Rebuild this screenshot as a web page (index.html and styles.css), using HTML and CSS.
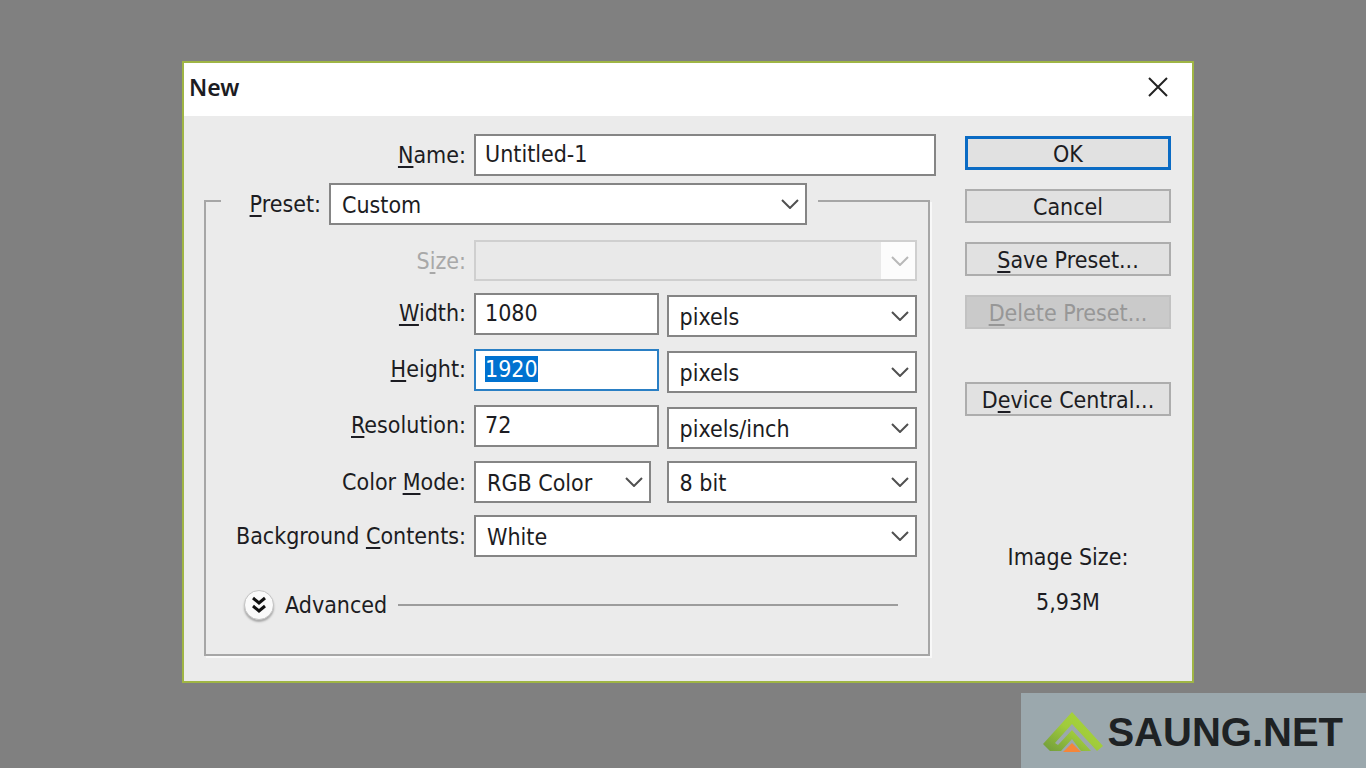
FILE: index.html
```html
<!DOCTYPE html>
<html lang="en">
<head>
<meta charset="utf-8">
<title>New</title>
<link rel="stylesheet" href="styles.css">
</head>
<body>
<div class="page">
  <form class="dialog" role="dialog" aria-labelledby="dialog-title">
    <header class="titlebar">
      <h1 class="title" id="dialog-title">New</h1>
      <button class="close" type="button" aria-label="Close">
        <svg viewBox="0 0 20 20" width="20" height="20"><path d="M1 1L19 19M19 1L1 19" fill="none" stroke="#222" stroke-width="2"/></svg>
      </button>
    </header>
    <div class="content">
      <div class="main">
        <div class="name-row">
          <label class="label" for="name"><u>N</u>ame:</label>
          <input class="field" id="name" type="text" value="Untitled-1">
        </div>
        <fieldset class="group">
          <legend class="legend">
            <span class="preset-row">
              <label class="label" for="preset"><u>P</u>reset:</label>
              <span class="select">
                <select id="preset"><option>Custom</option></select>
                <svg class="chevron" viewBox="0 0 18 10"><path d="M1 1L9 9L17 1"/></svg>
              </span>
            </span>
          </legend>
          <div class="rows">
            <div class="row">
              <label class="label label-off" for="size">S<u>i</u>ze:</label>
              <span class="select select-off">
                <select id="size" disabled><option></option></select>
                <svg class="chevron" viewBox="0 0 18 10"><path d="M1 1L9 9L17 1"/></svg>
              </span>
            </div>
            <div class="row row-pair">
              <label class="label" for="width"><u>W</u>idth:</label>
              <input class="field" id="width" type="text" value="1080">
              <span class="select">
                <select aria-label="Width unit"><option>pixels</option></select>
                <svg class="chevron" viewBox="0 0 18 10"><path d="M1 1L9 9L17 1"/></svg>
              </span>
            </div>
            <div class="row row-pair">
              <label class="label" for="height"><u>H</u>eight:</label>
              <input class="field" id="height" type="text" value="1920">
              <span class="select">
                <select aria-label="Height unit"><option>pixels</option></select>
                <svg class="chevron" viewBox="0 0 18 10"><path d="M1 1L9 9L17 1"/></svg>
              </span>
            </div>
            <div class="row row-pair">
              <label class="label" for="resolution"><u>R</u>esolution:</label>
              <input class="field" id="resolution" type="text" value="72">
              <span class="select">
                <select aria-label="Resolution unit"><option>pixels/inch</option></select>
                <svg class="chevron" viewBox="0 0 18 10"><path d="M1 1L9 9L17 1"/></svg>
              </span>
            </div>
            <div class="row row-mode">
              <label class="label" for="mode">Color <u>M</u>ode:</label>
              <span class="select select-narrow">
                <select id="mode"><option>RGB Color</option></select>
                <svg class="chevron" viewBox="0 0 18 10"><path d="M1 1L9 9L17 1"/></svg>
              </span>
              <span class="select">
                <select aria-label="Bit depth"><option>8 bit</option></select>
                <svg class="chevron" viewBox="0 0 18 10"><path d="M1 1L9 9L17 1"/></svg>
              </span>
            </div>
            <div class="row">
              <label class="label" for="background">Background <u>C</u>ontents:</label>
              <span class="select">
                <select id="background"><option>White</option></select>
                <svg class="chevron" viewBox="0 0 18 10"><path d="M1 1L9 9L17 1"/></svg>
              </span>
            </div>
          </div>
          <div class="advanced">
            <button class="expand" type="button" aria-labelledby="advanced-label">
              <svg viewBox="0 0 16 18" width="16" height="18"><path d="M2 2L8 7L14 2M2 10L8 15L14 10" fill="none" stroke="#111" stroke-width="3"/></svg>
            </button>
            <span id="advanced-label">Advanced</span>
            <span class="rule"></span>
          </div>
        </fieldset>
      </div>
      <div class="side">
        <button class="button button-default" type="submit">OK</button>
        <button class="button" type="button">Cancel</button>
        <button class="button" type="button"><span><u>S</u>ave Preset...</span></button>
        <button class="button" type="button" disabled><span><u>D</u>elete Preset...</span></button>
        <button class="button button-apart" type="button"><span>D<u>e</u>vice Central...</span></button>
        <div class="image-size">
          <span>Image Size:</span>
          <span>5,93M</span>
        </div>
      </div>
    </div>
  </form>
  <footer class="brand">
    <svg viewBox="0 0 60 40" width="60" height="40" aria-hidden="true">
      <defs>
        <linearGradient id="leaf" x1="0" y1="1" x2="1" y2="0">
          <stop offset="0" stop-color="#6f9a3c"/>
          <stop offset=".5" stop-color="#a0cb3b"/>
          <stop offset="1" stop-color="#a9d83a"/>
        </linearGradient>
      </defs>
      <path d="M0 32L29 0L60 34L54 39L29 12L12 31L15 33L29 18L48 39H38L29 27L18 39H7Z" fill="url(#leaf)"/>
      <path d="M20 40L29 31L38 40Z" fill="#f5863a"/>
    </svg>
    <span>SAUNG.NET</span>
  </footer>
</div>
<script src="script.js"></script>
</body>
</html>
```
FILE: styles.css
```css
* {
  box-sizing: border-box;
}

body {
  margin: 0;
  background: #808080;
  color: #1c1c22;
  font-family: "DejaVu Sans Condensed", "Noto Sans", sans-serif;
  font-size: 23px;
  line-height: 30px;
}

input,
select,
button {
  margin: 0;
  color: inherit;
  font: inherit;
}

u {
  text-decoration-thickness: 2px;
  text-underline-offset: 3px;
}

::selection {
  background: #0072d0;
  color: #fff;
}

.page {
  display: flex;
  flex-direction: column;
  min-height: 100vh;
  padding-top: 61px;
}

.dialog {
  margin: 0 172px 10px 182px;
  border: 2px solid #9fb545;
  background: #ebebeb;
}

.titlebar {
  display: flex;
  align-items: center;
  justify-content: space-between;
  height: 53px;
  padding: 0 24px 5px 5px;
  background: #fff;
}

.title {
  margin: 0;
  font-family: "Noto Sans", sans-serif;
  font-size: 23px;
  font-weight: 600;
}

.close {
  display: flex;
  padding: 0;
  border: 0;
  background: none;
}

.content {
  display: flex;
  gap: 29px;
  padding: 18px 21px 25px 20px;
}

.main {
  flex: 1;
}

.name-row {
  display: grid;
  grid-template-columns: 262px 1fr;
  column-gap: 8px;
}

.label {
  align-self: center;
  text-align: right;
  white-space: nowrap;
}

.label-off {
  color: #a8a8a8;
}

.field {
  width: 100%;
  min-width: 0;
  height: 42px;
  padding: 0 9px 3px;
  border: 2px solid #858585;
  border-radius: 0;
  background: #fff;
  outline: 0;
}

.field:focus {
  border-color: #2a7fc4;
}

.group {
  min-width: 0;
  margin: 0 6px 0 0;
  padding: 0;
  border: 2px solid #a6a6a6;
  box-shadow: 2px 2px 0 #f8f8f8;
}

.legend {
  width: 597px;
  margin-left: 15px;
  padding: 7px 11px 0 0;
}

.preset-row {
  display: grid;
  grid-template-columns: 100px 1fr;
  column-gap: 8px;
}

.select {
  display: grid;
  grid-template-columns: 1fr 36px;
  align-items: center;
  height: 42px;
  border: 2px solid #858585;
  background: #fff;
}

.select select {
  grid-area: 1 / 1 / 2 / 3;
  width: 100%;
  height: 100%;
  padding: 2px 36px 0 11px;
  border: 0;
  background: none;
  appearance: none;
  outline: 0;
}

.chevron {
  grid-area: 1 / 2;
  width: 18px;
  height: 10px;
  margin-left: 12px;
  fill: none;
  stroke: #505050;
  stroke-width: 2;
  pointer-events: none;
}

.select-off {
  height: 41px;
  border-color: #cfcfcf;
  background: linear-gradient(to left, #fcfcfc 34px, #e9e9e9 34px);
}

.select-off .chevron {
  stroke: #b8b8b8;
}

.rows {
  display: grid;
  row-gap: 12px;
  padding: 15px 11px 0 18px;
}

.row {
  display: grid;
  grid-template-columns: 242px 1fr;
  column-gap: 8px;
}

.row-pair {
  grid-template-columns: 242px 185fr 251fr;
  height: 44px;
}

.row-mode {
  grid-template-columns: 242px 185fr 251fr;
}

.row-pair .label {
  align-self: start;
  padding-top: 5px;
}

.row-pair .select {
  align-self: end;
}

.select-narrow {
  margin-right: 8px;
}

.advanced {
  display: flex;
  align-items: center;
  gap: 11px;
  padding: 33px 30px 34px 38px;
}

.expand {
  display: flex;
  align-items: center;
  justify-content: center;
  width: 30px;
  height: 30px;
  padding: 0;
  border: 1px solid #c4c4c4;
  border-radius: 50%;
  background: #fafafa;
  box-shadow: 0 2px 2px #a8a8a8;
}

.rule {
  flex: 1;
  height: 2px;
  background: #9c9c9c;
}

.side {
  display: flex;
  flex-direction: column;
  gap: 19px;
  width: 206px;
  padding-top: 2px;
}

.button {
  display: flex;
  align-items: center;
  justify-content: center;
  height: 34px;
  padding: 2px 0 0;
  border: 2px solid #adadad;
  background: #e1e1e1;
  white-space: nowrap;
}

.button-default {
  border: 3px solid #0a6bc4;
}

.button:disabled {
  border-color: #c2c2c2;
  background: #cacaca;
  color: #979797;
}

.button-apart {
  margin-top: 34px;
}

.image-size {
  display: flex;
  flex-direction: column;
  gap: 15px;
  margin-top: 107px;
  text-align: center;
}

.brand {
  display: flex;
  align-items: center;
  align-self: flex-end;
  gap: 4px;
  height: 75px;
  margin-top: auto;
  padding: 2px 23px 0 22px;
  background: #9ba8ad;
  color: #1e2224;
  font-family: "Liberation Sans", sans-serif;
  font-size: 40px;
  font-weight: 700;
  line-height: 46px;
}
```
FILE: script.js
```js
const height = document.getElementById("height");
height.focus();
height.select();
```
